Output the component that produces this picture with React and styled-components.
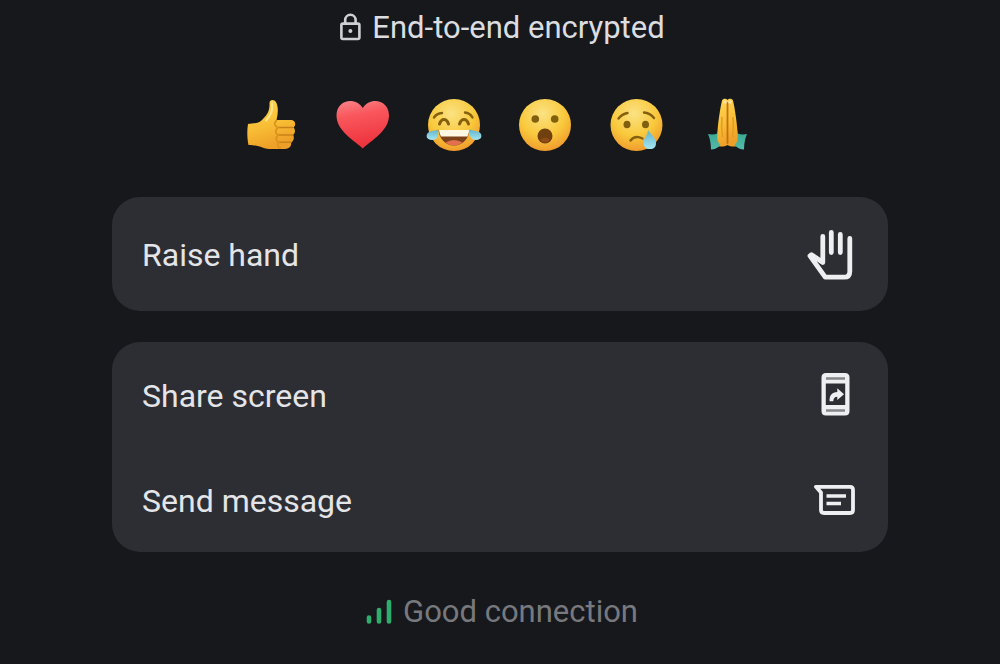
import React from 'react';
import styled, { createGlobalStyle } from 'styled-components';

const GlobalStyle = createGlobalStyle`
  body {
    margin: 0;
    background-color: #16181c;
    font-family: Roboto, "Liberation Sans", sans-serif;
  }
`;

const Sheet = styled.main`
  display: flex;
  flex-direction: column;
  padding: 10px 112px 16px;
`;

const Status = styled.p`
  display: flex;
  align-items: center;
  justify-content: center;
  gap: 10px;
  margin: 0;
  padding-left: 3px;
  font-size: 31px;
  line-height: 36px;
  color: ${({ $muted }) => ($muted ? '#77797e' : '#dcdde0')};
`;

const Reactions = styled.div`
  display: flex;
  justify-content: center;
  gap: 30px;
  margin: 49px 0 41px;
`;

const ReactionButton = styled.button`
  padding: 0;
  border: none;
  background: none;
  cursor: pointer;

  & > svg {
    display: block;
  }
`;

const Card = styled.section`
  display: flex;
  flex-direction: column;
  margin-bottom: ${({ $last }) => ($last ? 42 : 31)}px;
  border-radius: 28px;
  overflow: hidden;
  background-color: #2d2e33;
`;

const Action = styled.button`
  display: flex;
  align-items: center;
  justify-content: space-between;
  height: ${({ $tall }) => ($tall ? 114 : 105)}px;
  padding: 2px 32px 0 30px;
  border: none;
  background: none;
  color: #e4e5e8;
  font-family: inherit;
  font-size: 32px;
  line-height: 36px;
  text-align: left;
  cursor: pointer;
`;

const LockIcon = () => (
  <svg width="24" height="30" viewBox="0 0 24 30" fill="none" stroke="#cfd0d3" strokeWidth="2.6" aria-hidden="true">
    <path d="M7.2 10.5V7a5.2 5.2 0 0 1 10.4 0v3.5" />
    <rect x="3.4" y="10.6" width="18" height="15.4" rx="1.5" />
    <circle cx="12.4" cy="18" r="2" fill="#cfd0d3" stroke="none" />
  </svg>
);

const SignalIcon = () => (
  <svg width="28" height="28" viewBox="0 0 28 28" stroke="#2fae6b" strokeWidth="4.6" strokeLinecap="round" aria-hidden="true">
    <path d="M4 19.5v4M14 12v11.5M24 4v19.5" />
  </svg>
);

const HandIcon = () => (
  <svg width="50" height="54" viewBox="0 0 50 54" fill="none" stroke="#eeeff1" strokeWidth="4.8" strokeLinecap="round" strokeLinejoin="round" aria-hidden="true">
    <path d="M16.8 8.5V34.500L5.500 26.600 4 27.800 19.200 49.200H38q5.800 0 5.800-5.800V10.500" />
    <path d="M25.300 4.500V24.500M34.300 6.500V24.500" />
  </svg>
);

const ShareIcon = () => (
  <svg width="40" height="48" viewBox="0 0 40 48" aria-hidden="true">
    <path fill="#eeeff1" fillRule="evenodd" d="M10 1H29q4.500 0 4.500 4.500V39q0 4.500-4.500 4.500H10Q5.500 43.500 5.500 39V5.500Q5.500 1 10 1ZM9.800 11.500V33H29.200V11.500Z" />
    <path stroke="#85868b" strokeWidth="2.600" d="M10 6.500H29M10 38.500H29" />
    <path fill="#eeeff1" d="M13.600 29.300C13.200 23.500 16 20 21.300 20V16.200L28 22.200 21.300 28V24.800C18.500 24.800 17.500 26.500 17.300 29.300Z" />
  </svg>
);

const MessageIcon = () => (
  <svg width="44" height="40" viewBox="0 0 44 40" fill="none" stroke="#eeeff1" strokeWidth="3.8" strokeLinejoin="round" aria-hidden="true">
    <path d="M4 5.800H38q3 0 3 3V29q0 3-3 3H12q-3 0-3-3V11.500Z" />
    <path d="M14.500 15H34M14.500 22.500H29" strokeWidth="3.400" />
  </svg>
);

const ThumbsUp = () => (
  <>
    <path fill="url(#hand)" d="M6 29C10 28.500 16 29 20 25 24 21 28 17 27.500 8 27.500 4 33 4 34.500 8 36.500 13 36 19 34.500 25H50C54 26 54 31 51.500 32.500 54 35 53 39 51 40 53 43 51 47 49 47.500 50 51 47 54 43 54H27C21 54 18 50 6.500 50 5 43 5 35 6 29Z" />
    <path fill="none" stroke="#c8821a" strokeWidth="1.500" strokeLinecap="round" d="M37 32.500H51M37 40H51M37 47.300H49" />
    <path fill="none" stroke="#dc941d" strokeWidth="1.800" strokeLinecap="round" d="M34.500 25.500C31 29 33 31 36 32.500 33 35 33 38 36 40 33 43 34 46 37 47.300 35 50 36 53 38 53" />
    <path fill="none" stroke="#ffe58a" strokeWidth="2" strokeLinecap="round" d="M30 8C31 16 29 20 24 25.500" />
  </>
);

const Heart = () => (
  <path fill="url(#heart)" d="M29.800 53.500C22 46 3.500 36 3.500 20.500 3.500 4 23 1.500 29.800 13 36.500 1.500 56 4 56 20.500 56 36 37.500 46 29.800 53.500Z" />
);

const Joy = () => (
  <>
    <circle cx="30" cy="30" r="26" fill="url(#face)" />
    <g fill="none" strokeLinecap="round" stroke="#85600f">
      <path strokeWidth="2.400" d="M10 22.500Q12.500 18.500 18 18M41 17.500Q46 18 48.500 22.500" />
      <path strokeWidth="3" d="M15.500 29Q17 24.500 20 24.500T24.500 29M35.500 29Q37 24.500 40 24.500T44.500 29" />
    </g>
    <path fill="#7c431b" d="M14.500 35H45.500C45 43 39 50.500 30 50.500S15 43 14.500 35Z" />
    <path fill="#fff8e2" d="M15 35H45.200Q45 38.500 43.500 41.500H17Q15.200 38.500 15 35Z" />
    <path fill="#e2704c" d="M21.500 47.500Q30 42.500 38.500 47.500 35 50.500 30 50.500T21.500 47.500Z" />
    <path fill="url(#tear)" d="M14 34.500C15 41 13 45 8 45 2 45 1 39.500 5 37 8 35.500 11 36 14 34.500ZM46 34.500C45 41 47 45 52 45 58 45 59 39.500 55 37 52 35.500 49 36 46 34.500Z" />
  </>
);

const Wow = () => (
  <>
    <circle cx="30" cy="30" r="26" fill="url(#face)" />
    <ellipse cx="20.300" cy="24" rx="3.800" ry="3.800" fill="#80600f" />
    <ellipse cx="39.700" cy="24" rx="3.800" ry="3.800" fill="#80600f" />
    <ellipse cx="30" cy="41" rx="7.500" ry="7.500" fill="#70400f" />
    <path fill="#8f4b16" d="M25 45Q30 40 35 45 30 50 25 45Z" />
  </>
);

const Cry = () => (
  <>
    <circle cx="30.500" cy="30" r="26" fill="url(#face)" />
    <path fill="none" stroke="#85600f" strokeWidth="2.400" strokeLinecap="round" d="M12.500 23.500Q16 19 21.500 18M38 17.500Q44 18 48 23M24.500 45.500Q29 39.500 36.500 43.500" />
    <ellipse cx="21" cy="29.500" rx="3.500" ry="3.800" fill="#80600f" />
    <ellipse cx="39.500" cy="29.500" rx="3.500" ry="3.800" fill="#80600f" />
    <path fill="url(#tear)" d="M42 35C44.500 39 50 43 50 48 50 52 48 54 44 54S37.500 52 37.500 48C37.500 43 41.500 41 42 35Z" />
  </>
);

const Pray = () => (
  <>
    <path fill="url(#hand)" d="M30.500 50C27 52 22 52 18.500 50L20.500 36C21.500 24 23.500 12 25 5.500 26 3 29.500 3.500 30.500 5 31.500 3.500 35 3 36 5.500 37.500 12 39.500 24 40.500 36L42.500 50C39 52 34 52 30.500 50Z" />
    <path stroke="#c46d14" strokeWidth="1.800" strokeLinecap="round" d="M30.500 8V48" />
    <path fill="none" stroke="#e79a21" strokeWidth="1.500" d="M25 22Q24 32 25.500 42M36 22Q37 32 35.500 42" />
    <path fill="#ffe0ae" d="M26.500 5.500h3v3h-3zM31.500 5.500h3v3h-3z" />
    <path fill="url(#cuff)" d="M11 39Q16 40 20.500 38.500 19 46 23.500 50 19 54.500 14 54.500 14 46 11 39ZM50 39Q45 40 40.500 38.500 42 46 37.500 50 42 54.500 47 54.500 47 46 50 39Z" />
  </>
);

// gradients shared by all the reaction drawings
const GradientDefs = styled.svg`
  position: absolute;
`;

const Gradients = () => (
  <GradientDefs width="0" height="0" aria-hidden="true">
    <defs>
      <radialGradient id="face" cx="0.45" cy="0.28" r="0.78">
        <stop offset="0" stopColor="#fbe283" />
        <stop offset="0.55" stopColor="#f9c93c" />
        <stop offset="1" stopColor="#ee932a" />
      </radialGradient>
      <linearGradient id="hand" x1="0" y1="0" x2="0.3" y2="1">
        <stop offset="0" stopColor="#ffd956" />
        <stop offset="0.6" stopColor="#f8bd35" />
        <stop offset="1" stopColor="#ee9f27" />
      </linearGradient>
      <linearGradient id="heart" x1="0" y1="0" x2="0.2" y2="1">
        <stop offset="0" stopColor="#f9868a" />
        <stop offset="0.35" stopColor="#f9575d" />
        <stop offset="1" stopColor="#ee333d" />
      </linearGradient>
      <linearGradient id="tear" x1="0" y1="0" x2="0" y2="1">
        <stop offset="0" stopColor="#62b4ca" />
        <stop offset="1" stopColor="#a4e5f1" />
      </linearGradient>
      <linearGradient id="cuff" x1="0" y1="0" x2="0" y2="1">
        <stop offset="0" stopColor="#3ba995" />
        <stop offset="1" stopColor="#55bba9" />
      </linearGradient>
    </defs>
  </GradientDefs>
);

const reactions = [
  { label: 'Thumbs up', Drawing: ThumbsUp },
  { label: 'Heart', Drawing: Heart },
  { label: 'Tears of joy', Drawing: Joy },
  { label: 'Surprised', Drawing: Wow },
  { label: 'Crying', Drawing: Cry },
  { label: 'Folded hands', Drawing: Pray },
];

const App = () => {
  return (
    <>
      <GlobalStyle />
      <Gradients />
      <Sheet>
        <Status>
          <LockIcon />
          <span>End-to-end encrypted</span>
        </Status>
        <Reactions>
          {reactions.map(({ label, Drawing }) => (
            <ReactionButton key={label} type="button" aria-label={label}>
              <svg width="61" height="61" viewBox="0 0 61 61" aria-hidden="true">
                <Drawing />
              </svg>
            </ReactionButton>
          ))}
        </Reactions>
        <Card>
          <Action type="button" $tall>
            <span>Raise hand</span>
            <HandIcon />
          </Action>
        </Card>
        <Card $last>
          <Action type="button">
            <span>Share screen</span>
            <ShareIcon />
          </Action>
          <Action type="button">
            <span>Send message</span>
            <MessageIcon />
          </Action>
        </Card>
        <Status $muted>
          <SignalIcon />
          <span>Good connection</span>
        </Status>
      </Sheet>
    </>
  );
};

export default App;
